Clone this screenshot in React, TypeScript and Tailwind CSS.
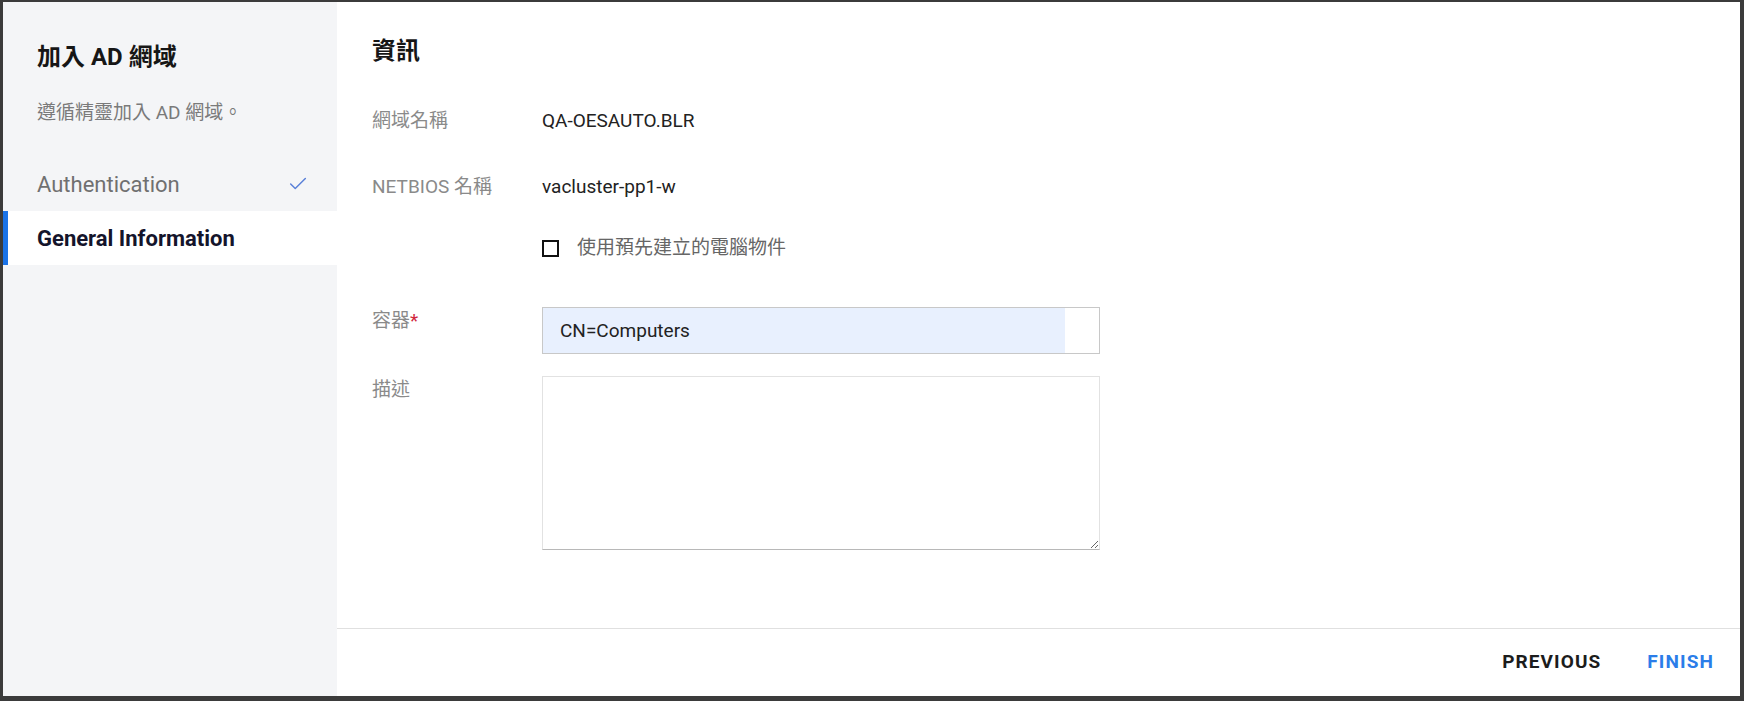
import { Check } from 'lucide-react';

const sans = "font-['Roboto','Noto_Sans_CJK_TC',sans-serif]";

function NavItem({ label, done, active }: { label: string; done?: boolean; active?: boolean }) {
  return (
    <div
      className={
        'relative flex h-[54px] items-center justify-between pl-[34px] pr-[28px] ' +
        (active ? 'bg-white' : '')
      }
    >
      {active && <div className="absolute left-0 top-0 h-full w-[5px] bg-[#1a73e8]" />}
      <span
        className={
          'text-[22px] ' + (active ? 'font-bold text-[#14142b]' : 'text-[#707070]')
        }
      >
        {label}
      </span>
      {done && <Check size={22} strokeWidth={1.6} className="text-[#5a80d8]" />}
    </div>
  );
}

function Row({ label, children }: { label: React.ReactNode; children: React.ReactNode }) {
  return (
    <div className="flex items-start">
      <div className="w-[170px] shrink-0 text-[19px] leading-[26px] text-[#8a8a8a]">{label}</div>
      <div className="flex-1">{children}</div>
    </div>
  );
}

export default function App() {
  return (
    <div className={`h-[701px] w-full bg-[#3b3b3b] pl-[3px] pr-[4px] pt-[2px] pb-[5px] ${sans}`}>
      <div className="flex h-full w-full bg-white">
        {/* sidebar */}
        <div className="w-[334px] shrink-0 bg-[#f4f5f7] pt-[39px]">
          <h1 className="px-[34px] text-[24px] font-bold leading-[32px] text-[#161616]">加入 AD 網域</h1>
          <p className="mt-[27px] px-[34px] text-[19px] leading-[26px] text-[#7a7a7a]">遵循精靈加入 AD 網域。</p>
          <div className="mt-[31px]">
            <NavItem label="Authentication" done />
            <NavItem label="General Information" active />
          </div>
        </div>

        {/* main */}
        <div className="flex flex-1 flex-col">
          <div className="flex-1 pl-[35px] pt-[33px]">
            <h2 className="text-[24px] font-bold leading-[32px] text-[#161616]">資訊</h2>
            <div className="mt-[41px]">
              <Row label="網域名稱">
                <span className="text-[19px] leading-[26px] text-[#222]">QA-OESAUTO.BLR</span>
              </Row>
            </div>
            <div className="mt-[40px]">
              <Row label="NETBIOS 名稱">
                <span className="text-[19px] leading-[26px] text-[#222]">vacluster-pp1-w</span>
              </Row>
            </div>
            <div className="mt-[35px]">
              <Row label="">
                <label className="flex items-center gap-[18px]">
                  <span className="block h-[17px] w-[17px] border-2 border-[#111]" />
                  <span className="text-[19px] leading-[26px] text-[#666]">使用預先建立的電腦物件</span>
                </label>
              </Row>
            </div>
            <div className="mt-[46px]">
              <Row
                label={
                  <span className="relative top-[1px]">
                    容器<span className="text-[#d0263c]">*</span>
                  </span>
                }
              >
                <div className="flex h-[47px] w-[558px] border border-[#c8c8c8]">
                  <input
                    readOnly
                    value="CN=Computers"
                    className="h-full flex-1 bg-[#e8f0fe] pl-[17px] text-[19px] text-[#222] outline-none"
                  />
                  <div className="w-[34px] bg-white" />
                </div>
              </Row>
            </div>
            <div className="mt-[22px]">
              <Row label={<span className="relative top-[1px]">描述</span>}>
                <textarea className="block h-[174px] w-[558px] resize border border-[#e2e2e2] border-b-[#b8b8b8] outline-none" />
              </Row>
            </div>
          </div>

          <div className="flex h-[68px] items-center justify-end gap-[14px] border-t border-[#e0e0e0] pr-[10px]">
            <button className="px-4 text-[19px] font-bold tracking-[1.1px] text-[#1c1c1c]">PREVIOUS</button>
            <button className="px-4 text-[19px] font-bold tracking-[1.1px] text-[#2b7de9]">FINISH</button>
          </div>
        </div>
      </div>
    </div>
  );
}
